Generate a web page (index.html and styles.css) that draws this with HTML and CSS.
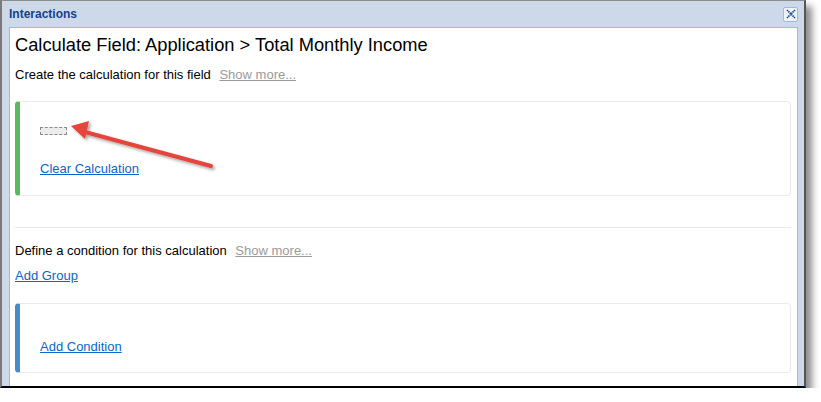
FILE: index.html
```html
<!DOCTYPE html>
<html lang="en">
<head>
    <meta charset="UTF-8">
    <title>Interactions</title>
    <link rel="stylesheet" href="styles.css">
</head>
<body>
    <div class="window">
        <div class="titlebar">
            <span class="title">Interactions</span>
            <button class="close-btn" title="Close">
                <svg width="10" height="10" viewBox="0 0 10 10">
                    <path d="M1 1 L9 9 M9 1 L1 9" stroke="#15428b" stroke-width="1.6" stroke-dasharray="1.4 0.6"/>
                </svg>
            </button>
        </div>

        <div class="pane">
            <h1 class="heading">Calculate Field: Application &gt; Total Monthly Income</h1>
            <p class="intro">Create the calculation for this field <a class="show-more" href="#">Show more...</a></p>

            <div class="card card-green">
                <div class="placeholder-box"></div>
                <a class="link" href="#">Clear Calculation</a>
            </div>

            <hr class="divider">

            <p class="intro intro-condition">Define a condition for this calculation <a class="show-more" href="#">Show more...</a></p>
            <a class="link add-group" href="#">Add Group</a>

            <div class="card card-blue">
                <a class="link" href="#">Add Condition</a>
            </div>

            <!-- annotation arrow pointing at the empty calculation box -->
            <svg class="arrow" width="160" height="60" viewBox="0 0 160 60">
                <defs>
                    <filter id="shadow" x="-20%" y="-40%" width="140%" height="180%">
                        <feDropShadow dx="2" dy="2" stdDeviation="1.5" flood-color="#000" flood-opacity="0.35"/>
                    </filter>
                </defs>
                <g filter="url(#shadow)">
                    <line x1="24" y1="15" x2="150" y2="49" stroke="#e5443a" stroke-width="4" stroke-linecap="round"/>
                    <polygon points="10,9 28,4 24,22" fill="#e5443a"/>
                </g>
            </svg>
        </div>
    </div>
</body>
</html>
```

FILE: styles.css
```css
body {
    margin: 0;
    background-color: #fff;
    font-family: "Liberation Sans", Arial, sans-serif;
}
.window {
    box-sizing: border-box;
    width: 806px;
    height: 388px;
    display: flex;
    flex-direction: column;
    background-color: #cdd9e8;
    border: 1px solid #8c8c8c;
    border-left: 2px solid #7a7a7a;
    border-right: 2px solid #555;
    border-bottom: 2px solid #000;
    padding: 0 6px 0 7px;
    box-shadow: 6px 6px 7px rgba(0,0,0,0.45);
}
.titlebar {
    height: 26px;
    display: flex;
    align-items: center;
    justify-content: space-between;
}
.title {
    color: #15428b;
    font-size: 12px;
    font-weight: bold;
}
.close-btn {
    box-sizing: border-box;
    width: 15px;
    height: 15px;
    padding: 0;
    display: flex;
    align-items: center;
    justify-content: center;
    background-color: #eef3fb;
    border: 1px solid #99bbe8;
    border-radius: 2px;
}
.pane {
    position: relative;
    flex: 1;
    background-color: #fff;
    border: 1px solid #99bbe8;
    border-bottom: none;
    padding: 0 6px 0 5px;
    font-size: 13px;
    color: #000;
}
.heading {
    font-size: 18.3px;
    font-weight: normal;
    margin: 6px 0 0 0;
    line-height: 22px;
}
.intro {
    margin: 11px 0 0 0;
    line-height: 15px;
}
.show-more {
    color: #9a9a9a;
    margin-left: 5px;
}
.card {
    border: 1px solid #ebebeb;
    border-left: 5px solid #5cb85c;
    border-radius: 4px;
    padding: 25px 20px 19px 20px;
    margin-top: 19px;
}
.card-green {
    height: 49px;
}
.card-blue {
    border-left-color: #4a89cc;
    padding-top: 35px;
    padding-bottom: 18px;
    margin-top: 20px;
    height: 15px;
}
.placeholder-box {
    box-sizing: border-box;
    width: 27px;
    height: 8px;
    border: 1px dashed #8a8a8a;
    background-color: #ececec;
    margin-bottom: 26px;
}
.link {
    color: #0a66c8;
    line-height: 15px;
}
.divider {
    border: none;
    border-top: 1px solid #e8e8e8;
    margin: 31px 0 0 0;
}
.intro-condition {
    margin-top: 15px;
}
.add-group {
    display: inline-block;
    margin-top: 10px;
}
.arrow {
    position: absolute;
    left: 51px;
    top: 89px;
}
```
